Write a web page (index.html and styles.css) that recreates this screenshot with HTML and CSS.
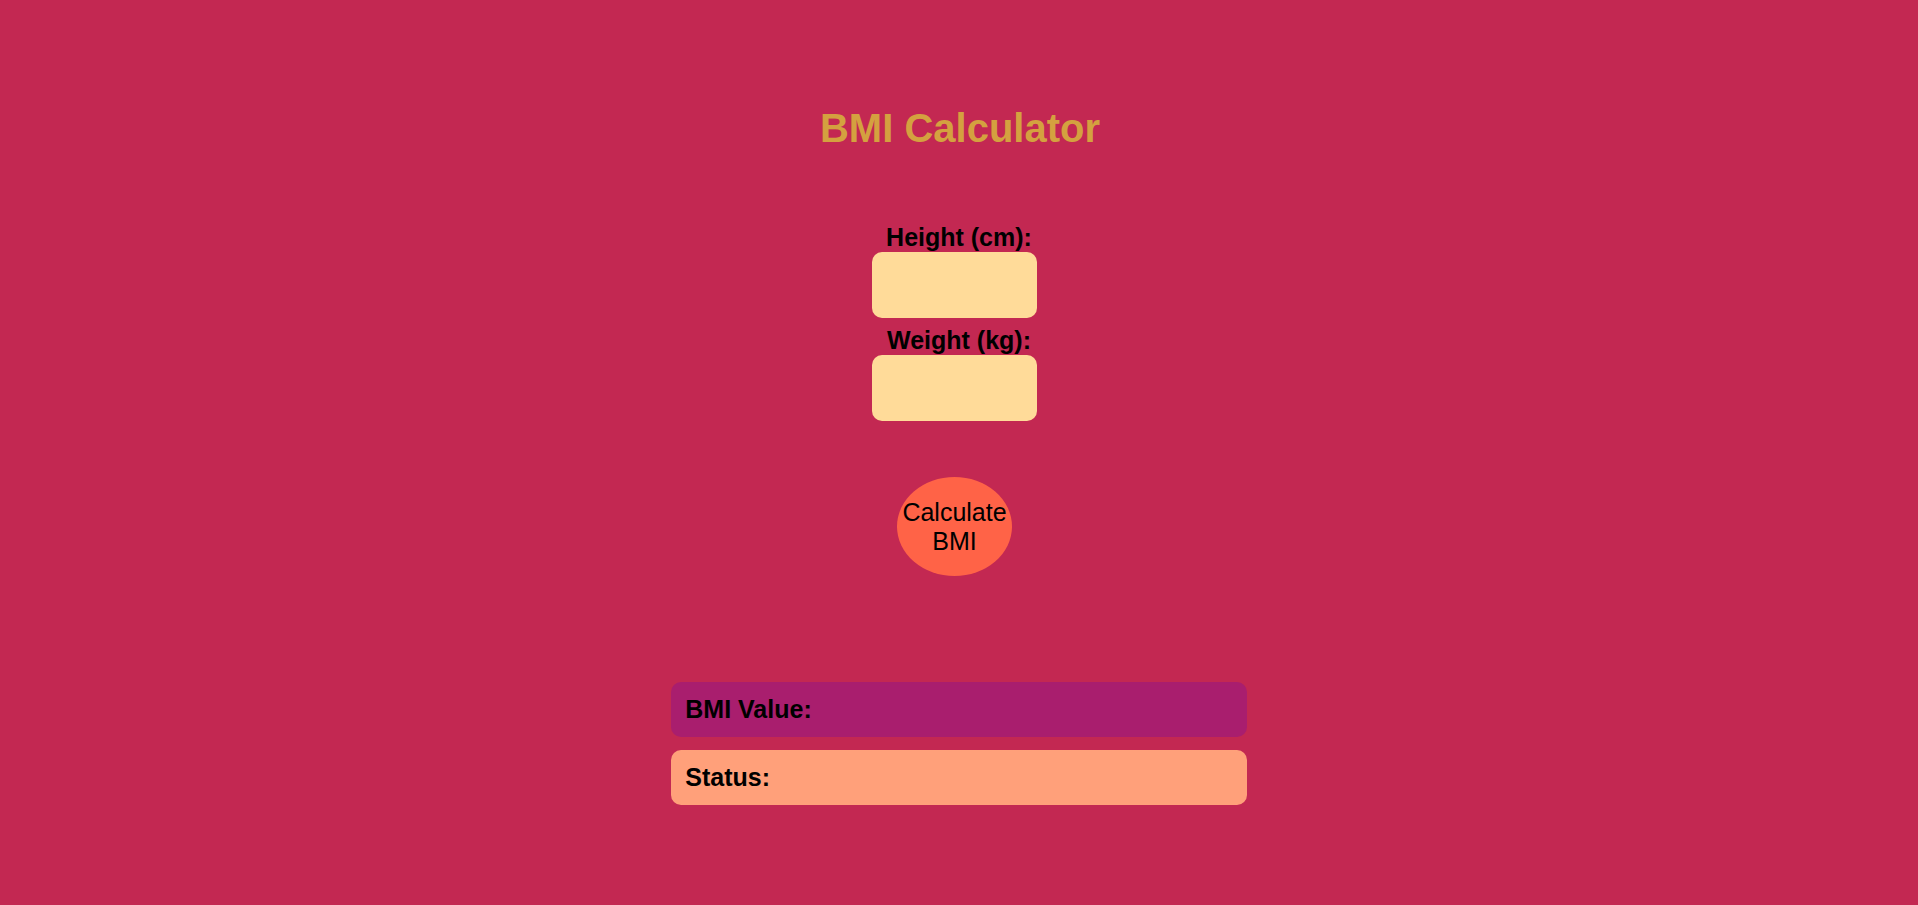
FILE: index.html
```html
<!DOCTYPE html>
<html lang="en">
<head>
<meta charset="utf-8">
<title>BMI Calculator</title>
<link rel="stylesheet" href="styles.css">
</head>
<body>
<main class="page">
  <h1 class="title">BMI Calculator</h1>
  <form class="form">
    <label class="label" for="height">Height (cm):</label>
    <input class="field" type="number" id="height">
    <label class="label label-second" for="weight">Weight (kg):</label>
    <input class="field" type="number" id="weight">
    <button class="calc" type="button">Calculate<br>BMI</button>
  </form>
  <section class="results">
    <div class="result result-value">BMI Value: <span></span></div>
    <div class="result result-status">Status: <span></span></div>
  </section>
</main>
</body>
</html>
```

FILE: styles.css
```css
html, body {
  margin: 0;
  padding: 0;
}
body {
  background: #c32852;
  font-family: "Liberation Sans", Arial, sans-serif;
  min-height: 905px;
}
.page {
  display: flex;
  flex-direction: column;
  align-items: center;
  padding-top: 105px;
}
.title {
  margin: 0 0 0 2px;
  font-size: 40px;
  line-height: 46px;
  font-weight: bold;
  color: #d4a13f;
}
.form {
  display: flex;
  flex-direction: column;
  align-items: center;
  margin-top: 72px;
}
.label {
  font-size: 25px;
  font-weight: bold;
  line-height: 29px;
  color: #000;
}
.label-second {
  margin-top: 8px;
}
.field {
  box-sizing: border-box;
  width: 165px;
  height: 66px;
  margin: 0 9px 0 0;
  border: none;
  border-radius: 10px;
  background: #ffdb99;
  outline: none;
  font-size: 20px;
  padding: 0 10px;
}
.calc {
  width: 115px;
  height: 99px;
  margin: 56px 9px 0 0;
  border: none;
  border-radius: 50%;
  background: #ff6347;
  font-family: "Liberation Sans", Arial, sans-serif;
  font-size: 25px;
  line-height: 29px;
  color: #000;
  padding: 0;
}
.results {
  width: 30%;
  display: flex;
  flex-direction: column;
  gap: 13px;
  margin-top: 106px;
}
.result {
  padding: 13px 14px;
  border-radius: 10px;
  font-size: 25px;
  font-weight: bold;
  line-height: 29px;
  color: #000;
}
.result-value {
  background: #a91e6e;
}
.result-status {
  background: #ffa07a;
}
```
